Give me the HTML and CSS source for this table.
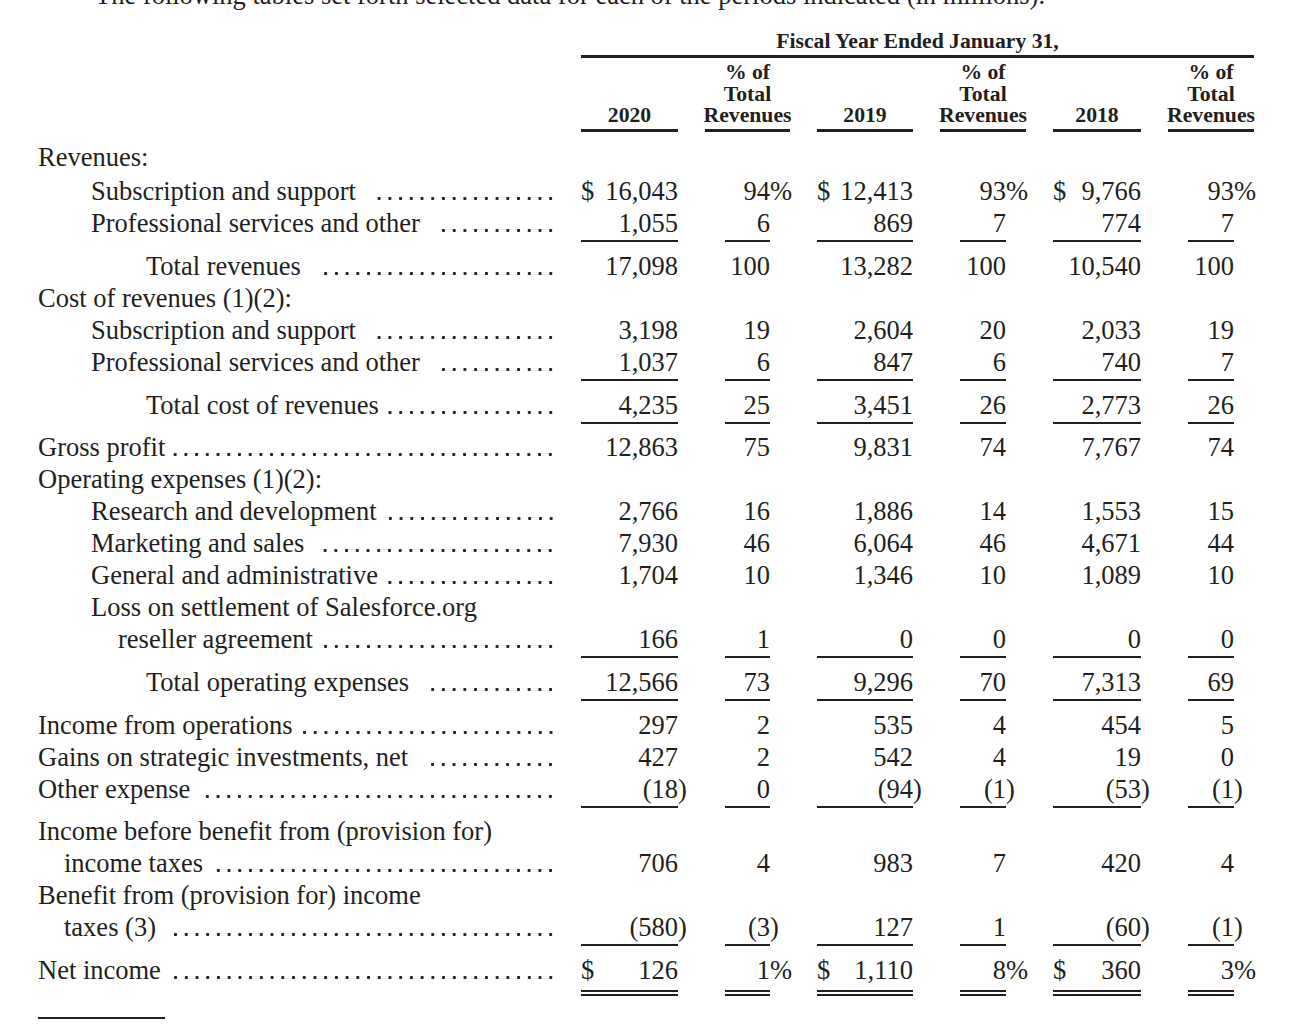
FILE: index.html
```html
<!DOCTYPE html>
<html lang="en">
<head>
<meta charset="utf-8">
<title>Selected financial data</title>
<link rel="stylesheet" href="styles.css">
</head>
<body>
<div class="page">
  <p class="intro">The following tables set forth selected data for each of the periods indicated (in millions).</p>

  <div class="head">
    <div class="fy">Fiscal Year Ended January 31,</div>
    <div class="hsp"></div>
    <div class="ch">2020</div>
    <div class="ch"><span>% of</span><span>Total</span><span>Revenues</span></div>
    <div class="ch">2019</div>
    <div class="ch"><span>% of</span><span>Total</span><span>Revenues</span></div>
    <div class="ch">2018</div>
    <div class="ch"><span>% of</span><span>Total</span><span>Revenues</span></div>
  </div>

  <div class="r first"><div class="l">Revenues:</div></div>
  <div class="r">
    <div class="l i1"><span>Subscription and support</span><span class="ld w"></span></div>
    <div class="n"><span class="d">$</span><span>16,043</span></div>
    <div class="p"><div class="pv">94<span class="h">%</span></div></div>
    <div class="n"><span class="d">$</span><span>12,413</span></div>
    <div class="p"><div class="pv">93<span class="h">%</span></div></div>
    <div class="n"><span class="d">$</span><span>9,766</span></div>
    <div class="p"><div class="pv">93<span class="h">%</span></div></div>
  </div>
  <div class="r ul">
    <div class="l i1"><span>Professional services and other</span><span class="ld w"></span></div>
    <div class="n">1,055</div>
    <div class="p"><div class="pv">6</div></div>
    <div class="n">869</div>
    <div class="p"><div class="pv">7</div></div>
    <div class="n">774</div>
    <div class="p"><div class="pv">7</div></div>
  </div>
  <div class="r">
    <div class="l i2"><span>Total revenues</span><span class="ld w"></span></div>
    <div class="n">17,098</div>
    <div class="p"><div class="pv">100</div></div>
    <div class="n">13,282</div>
    <div class="p"><div class="pv">100</div></div>
    <div class="n">10,540</div>
    <div class="p"><div class="pv">100</div></div>
  </div>

  <div class="r"><div class="l">Cost of revenues (1)(2):</div></div>
  <div class="r">
    <div class="l i1"><span>Subscription and support</span><span class="ld w"></span></div>
    <div class="n">3,198</div>
    <div class="p"><div class="pv">19</div></div>
    <div class="n">2,604</div>
    <div class="p"><div class="pv">20</div></div>
    <div class="n">2,033</div>
    <div class="p"><div class="pv">19</div></div>
  </div>
  <div class="r ul">
    <div class="l i1"><span>Professional services and other</span><span class="ld w"></span></div>
    <div class="n">1,037</div>
    <div class="p"><div class="pv">6</div></div>
    <div class="n">847</div>
    <div class="p"><div class="pv">6</div></div>
    <div class="n">740</div>
    <div class="p"><div class="pv">7</div></div>
  </div>
  <div class="r ul">
    <div class="l i2"><span>Total cost of revenues</span><span class="ld"></span></div>
    <div class="n">4,235</div>
    <div class="p"><div class="pv">25</div></div>
    <div class="n">3,451</div>
    <div class="p"><div class="pv">26</div></div>
    <div class="n">2,773</div>
    <div class="p"><div class="pv">26</div></div>
  </div>
  <div class="r">
    <div class="l"><span>Gross profit</span><span class="ld"></span></div>
    <div class="n">12,863</div>
    <div class="p"><div class="pv">75</div></div>
    <div class="n">9,831</div>
    <div class="p"><div class="pv">74</div></div>
    <div class="n">7,767</div>
    <div class="p"><div class="pv">74</div></div>
  </div>

  <div class="r"><div class="l">Operating expenses (1)(2):</div></div>
  <div class="r">
    <div class="l i1"><span>Research and development</span><span class="ld"></span></div>
    <div class="n">2,766</div>
    <div class="p"><div class="pv">16</div></div>
    <div class="n">1,886</div>
    <div class="p"><div class="pv">14</div></div>
    <div class="n">1,553</div>
    <div class="p"><div class="pv">15</div></div>
  </div>
  <div class="r">
    <div class="l i1"><span>Marketing and sales</span><span class="ld w"></span></div>
    <div class="n">7,930</div>
    <div class="p"><div class="pv">46</div></div>
    <div class="n">6,064</div>
    <div class="p"><div class="pv">46</div></div>
    <div class="n">4,671</div>
    <div class="p"><div class="pv">44</div></div>
  </div>
  <div class="r">
    <div class="l i1"><span>General and administrative</span><span class="ld"></span></div>
    <div class="n">1,704</div>
    <div class="p"><div class="pv">10</div></div>
    <div class="n">1,346</div>
    <div class="p"><div class="pv">10</div></div>
    <div class="n">1,089</div>
    <div class="p"><div class="pv">10</div></div>
  </div>
  <div class="r"><div class="l i1">Loss on settlement of Salesforce.org</div></div>
  <div class="r ul">
    <div class="l i1c"><span>reseller agreement</span><span class="ld"></span></div>
    <div class="n">166</div>
    <div class="p"><div class="pv">1</div></div>
    <div class="n">0</div>
    <div class="p"><div class="pv">0</div></div>
    <div class="n">0</div>
    <div class="p"><div class="pv">0</div></div>
  </div>
  <div class="r ul">
    <div class="l i2"><span>Total operating expenses</span><span class="ld w"></span></div>
    <div class="n">12,566</div>
    <div class="p"><div class="pv">73</div></div>
    <div class="n">9,296</div>
    <div class="p"><div class="pv">70</div></div>
    <div class="n">7,313</div>
    <div class="p"><div class="pv">69</div></div>
  </div>

  <div class="r">
    <div class="l"><span>Income from operations</span><span class="ld"></span></div>
    <div class="n">297</div>
    <div class="p"><div class="pv">2</div></div>
    <div class="n">535</div>
    <div class="p"><div class="pv">4</div></div>
    <div class="n">454</div>
    <div class="p"><div class="pv">5</div></div>
  </div>
  <div class="r">
    <div class="l"><span>Gains on strategic investments, net</span><span class="ld w"></span></div>
    <div class="n">427</div>
    <div class="p"><div class="pv">2</div></div>
    <div class="n">542</div>
    <div class="p"><div class="pv">4</div></div>
    <div class="n">19</div>
    <div class="p"><div class="pv">0</div></div>
  </div>
  <div class="r ul">
    <div class="l"><span>Other expense</span><span class="ld"></span></div>
    <div class="n">(18<span class="h">)</span></div>
    <div class="p"><div class="pv">0</div></div>
    <div class="n">(94<span class="h">)</span></div>
    <div class="p"><div class="pv">(1<span class="h">)</span></div></div>
    <div class="n">(53<span class="h">)</span></div>
    <div class="p"><div class="pv">(1<span class="h">)</span></div></div>
  </div>

  <div class="r"><div class="l">Income before benefit from (provision for)</div></div>
  <div class="r">
    <div class="l i0c"><span>income taxes</span><span class="ld"></span></div>
    <div class="n">706</div>
    <div class="p"><div class="pv">4</div></div>
    <div class="n">983</div>
    <div class="p"><div class="pv">7</div></div>
    <div class="n">420</div>
    <div class="p"><div class="pv">4</div></div>
  </div>
  <div class="r"><div class="l">Benefit from (provision for) income</div></div>
  <div class="r ul">
    <div class="l i0c"><span>taxes (3)</span><span class="ld w"></span></div>
    <div class="n">(580<span class="h">)</span></div>
    <div class="p"><div class="pv">(3<span class="h">)</span></div></div>
    <div class="n">127</div>
    <div class="p"><div class="pv">1</div></div>
    <div class="n">(60<span class="h">)</span></div>
    <div class="p"><div class="pv">(1<span class="h">)</span></div></div>
  </div>
  <div class="r dl">
    <div class="l"><span>Net income</span><span class="ld"></span></div>
    <div class="n"><span class="d">$</span><span>126</span></div>
    <div class="p"><div class="pv">1<span class="h">%</span></div></div>
    <div class="n"><span class="d">$</span><span>1,110</span></div>
    <div class="p"><div class="pv">8<span class="h">%</span></div></div>
    <div class="n"><span class="d">$</span><span>360</span></div>
    <div class="p"><div class="pv">3<span class="h">%</span></div></div>
  </div>

  <div class="fn"></div>
</div>
</body>
</html>
```
FILE: styles.css
```css
* { box-sizing: border-box; }
html, body { margin: 0; padding: 0; background: #ffffff; }
body {
  font-family: "Liberation Serif", "Times New Roman", serif;
  color: #231f20;
  font-size: 26.5px;
  line-height: 32px;
}
.page {
  width: 1306px;
  height: 1024px;
  overflow: hidden;
  padding-left: 38px;
}
.intro {
  margin: -21px 0 0 57px;
  white-space: nowrap;
}

/* header */
.head {
  display: grid;
  grid-template-columns: 516px 97px 85px 96px 86px 88px 86px;
  grid-template-rows: auto auto;
  column-gap: 27px;
  margin-top: 20.25px;
  font-weight: bold;
  font-size: 21.7px;
  line-height: 21.5px;
}
.fy {
  grid-column: 2 / 8;
  grid-row: 1;
  display: flex;
  justify-content: center;
  white-space: nowrap;
  padding-bottom: 2.5px;
  border-bottom: 3px solid #231f20;
}
.hsp { grid-column: 1; grid-row: 2; }
.ch {
  grid-row: 2;
  margin-top: 4px;
  display: flex;
  flex-direction: column;
  justify-content: flex-end;
  align-items: center;
  white-space: nowrap;
  padding-bottom: 2px;
  border-bottom: 3px solid #231f20;
}
.ch:nth-child(3) { grid-column: 2; }
.ch:nth-child(4) { grid-column: 3; }
.ch:nth-child(5) { grid-column: 4; }
.ch:nth-child(6) { grid-column: 5; }
.ch:nth-child(7) { grid-column: 6; }
.ch:nth-child(8) { grid-column: 7; }

/* body rows */
.r {
  display: grid;
  grid-template-columns: 516px 97px 85px 96px 86px 88px 86px;
  column-gap: 27px;
}
.r.first { margin-top: 9.5px; margin-bottom: 2px; }
.l {
  display: flex;
  white-space: nowrap;
  min-width: 0;
}
.l.i1 { padding-left: 53px; }
.l.i2 { padding-left: 108px; }
.l.i1c { padding-left: 80px; }
.l.i0c { padding-left: 26px; }
.ld {
  flex: 1;
  margin-left: 8px;
  margin-right: -2px;
  background-image: radial-gradient(circle at 50% 23.5px, #231f20 0, #231f20 1.3px, rgba(35,31,32,0) 1.9px);
  background-size: 10.73px 32px;
  background-repeat: repeat-x;
  background-position: right top;
}
.ld.w { margin-left: 18px; }
.n {
  display: flex;
  justify-content: flex-end;
  white-space: nowrap;
}
.n .d { margin-right: auto; }
.p { display: block; }
.pv {
  margin: 0 20px;
  text-align: right;
  white-space: nowrap;
}
.h {
  display: inline-block;
  width: 0;
  white-space: nowrap;
}

.ul { margin-bottom: 7.7px; }
.ul .n, .ul .pv {
  padding-bottom: 1px;
  border-bottom: 2px solid #231f20;
}
.dl .n, .dl .pv {
  padding-bottom: 4px;
  border-bottom: 6px double #231f20;
}

.fn {
  width: 127px;
  margin-top: 21px;
  border-top: 2px solid #231f20;
}
```
